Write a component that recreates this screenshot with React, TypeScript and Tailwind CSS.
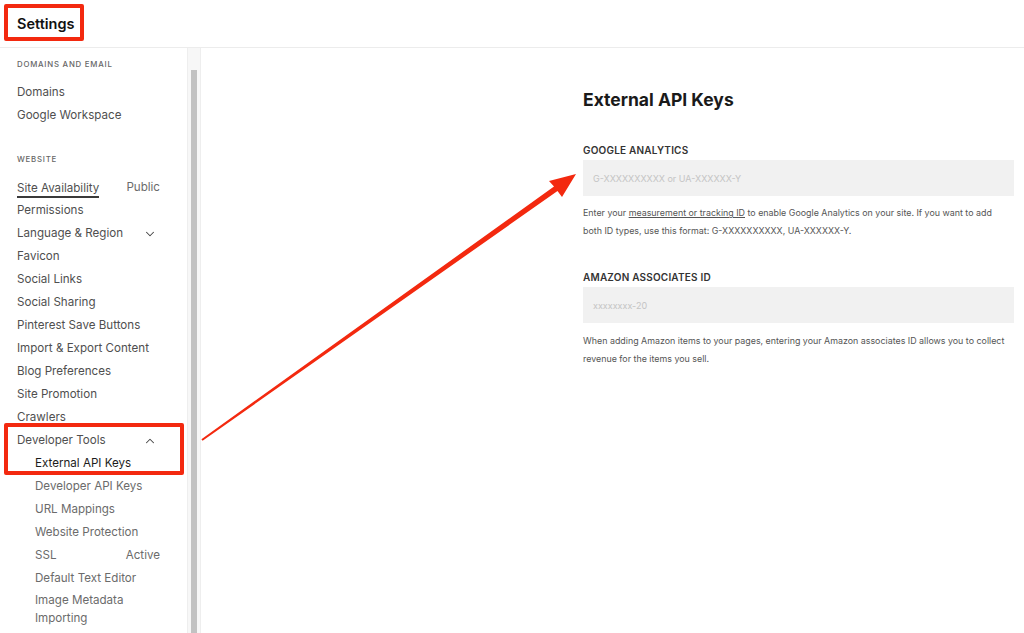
import React from "react";
import { ChevronDown, ChevronUp } from "lucide-react";

type Item = { label: string; right?: string; chevron?: "up" | "down"; sub?: boolean; active?: boolean; underline?: boolean; wrap?: boolean };

const websiteItems: Item[] = [
  { label: "Site Availability", right: "Public", underline: true },
  { label: "Permissions" },
  { label: "Language & Region", chevron: "down" },
  { label: "Favicon" },
  { label: "Social Links" },
  { label: "Social Sharing" },
  { label: "Pinterest Save Buttons" },
  { label: "Import & Export Content" },
  { label: "Blog Preferences" },
  { label: "Site Promotion" },
  { label: "Crawlers" },
  { label: "Developer Tools", chevron: "up" },
  { label: "External API Keys", sub: true, active: true },
  { label: "Developer API Keys", sub: true },
  { label: "URL Mappings", sub: true },
  { label: "Website Protection", sub: true },
  { label: "SSL", sub: true, right: "Active" },
  { label: "Default Text Editor", sub: true },
];

function Row({ item }: { item: Item }) {
  return (
    <div className={`flex h-[23px] items-center pr-[27px] ${item.sub ? "pl-[35px]" : "pl-[17px]"}`}>
      <span
        className={`${item.active ? "text-[#1c1c1c]" : item.sub ? "text-[#6b6b6b]" : "text-[#4f4f4f]"} ${
          item.underline ? "border-b-2 border-[#3a3a3a] leading-[16px] mt-[3px]" : ""
        }`}
      >
        {item.label}
      </span>
      {item.right && <span className="ml-auto text-[#6b6b6b]">{item.right}</span>}
      {item.chevron === "down" && <ChevronDown className="ml-auto mr-[3px] text-[#444]" size={14} strokeWidth={1.8} />}
      {item.chevron === "up" && <ChevronUp className="ml-auto mr-[3px] text-[#444]" size={14} strokeWidth={1.8} />}
    </div>
  );
}

export default function App() {
  return (
    <div
      className="relative h-[633px] w-[1024px] overflow-hidden bg-white text-[#333]"
      style={{ fontFamily: "Inter, 'Liberation Sans', sans-serif" }}
    >
      {/* Header */}
      <div className="flex h-[48px] items-center border-b border-[#ececec] pl-[17px]">
        <span className="text-[14.5px] font-semibold text-[#111]">Settings</span>
      </div>

      <div className="flex h-[585px]">
        {/* Sidebar */}
        <div className="w-[187px] shrink-0 pt-[9px] text-[11.6px]">
          <div className="flex h-[16px] items-center pl-[17px] text-[7.8px] font-medium tracking-[0.1em] text-[#666]">
            DOMAINS AND EMAIL
          </div>
          <div className="mt-[8px]">
            <Row item={{ label: "Domains" }} />
            <Row item={{ label: "Google Workspace" }} />
          </div>
          <div className="mt-[25px] flex h-[16px] items-center pl-[17px] text-[7.8px] font-medium tracking-[0.1em] text-[#666]">
            WEBSITE
          </div>
          <div className="mt-[8px]">
            {websiteItems.map((it) => (
              <Row key={it.label} item={it} />
            ))}
            <div className="pl-[35px] pt-[1px] leading-[18px] text-[#6b6b6b]">
              Image Metadata
              <br />
              Importing
            </div>
          </div>
        </div>

        {/* Scrollbar */}
        <div className="flex w-[14px] shrink-0 justify-center border-x border-[#eeeeee] bg-[#f7f7f7]">
          <div className="mt-[22px] h-full w-[6px] bg-[#c2c2c2]" />
        </div>

        {/* Main */}
        <div className="flex-1 pl-[382px] pr-[10px] pt-[39px]">
          <h1 className="text-[17.5px] font-bold text-[#1a1a1a]">External API Keys</h1>

          <div className="mt-[30px] text-[10px] font-semibold tracking-[0.02em] text-[#333]">GOOGLE ANALYTICS</div>
          <div className="mt-[2px] flex h-[36px] items-center bg-[#f1f1f1] pl-[10px] text-[9px] text-[#c4c4c4]">
            G-XXXXXXXXXX or UA-XXXXXX-Y
          </div>
          <p className="mt-[8px] whitespace-nowrap text-[8.9px] leading-[18px] text-[#555]">
            Enter your <span className="underline">measurement or tracking ID</span> to enable Google Analytics on your site. If you want to add
            <br />
            both ID types, use this format: G-XXXXXXXXXX, UA-XXXXXX-Y.
          </p>

          <div className="mt-[30px] text-[10px] font-semibold tracking-[0.02em] text-[#333]">AMAZON ASSOCIATES ID</div>
          <div className="mt-[2px] flex h-[36px] items-center bg-[#f1f1f1] pl-[10px] text-[9px] text-[#c4c4c4]">
            xxxxxxxx-20
          </div>
          <p className="mt-[9px] whitespace-nowrap text-[8.9px] leading-[18px] text-[#555]">
            When adding Amazon items to your pages, entering your Amazon associates ID allows you to collect
            <br />
            revenue for the items you sell.
          </p>
        </div>
      </div>

      {/* Annotation boxes */}
      <div className="absolute left-[4px] top-[4px] h-[37px] w-[80px] rounded-[2px] border-[4px] border-[#f3290f]" />
      <div className="absolute left-[4px] top-[423px] h-[52px] w-[180px] rounded-[2px] border-[4px] border-[#f3290f]" />

      {/* Arrow */}
      <svg className="pointer-events-none absolute left-0 top-0" width="1024" height="633" viewBox="0 0 1024 633">
        <polygon
          points="576,174 562,197 557.5,191 202.6,440.8 201.4,439.2 554,186.5 549,181"
          fill="#f3290f"
        />
      </svg>
    </div>
  );
}
